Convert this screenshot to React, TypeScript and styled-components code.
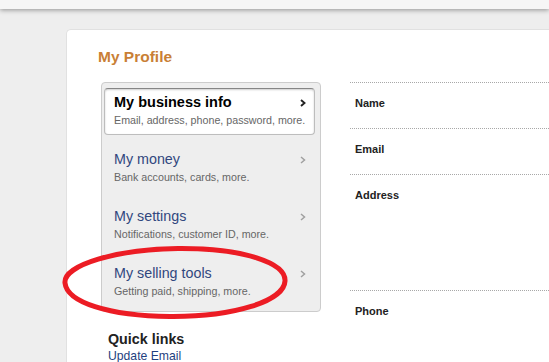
import React from "react";
import styled, { createGlobalStyle } from "styled-components";

const Global = createGlobalStyle`
  html, body {
    margin: 0;
    padding: 0;
    background: #eeeeee;
    font-family: "Liberation Sans", Arial, sans-serif;
    overflow: hidden;
  }
  #root { width: 549px; height: 362px; overflow: hidden; }
`;

const Page = styled.div`
  position: relative;
  width: 549px;
  height: 362px;
  overflow: hidden;
  background: #eeeeee;
`;

const TopBar = styled.div`
  height: 9px;
  background: #f6f6f6;
  box-shadow: 0 1px 5px rgba(0, 0, 0, 0.4);
  position: relative;
  z-index: 1;
`;

const Main = styled.div`
  padding: 20px 0 0 66px;
`;

const Card = styled.div`
  background: #ffffff;
  border: 1px solid #e1e1e1;
  border-right: none;
  border-top-left-radius: 5px;
  padding: 18px 0 0 31px;
  min-height: 400px;
`;

const Title = styled.h1`
  margin: 0;
  font-size: 15.5px;
  line-height: 18px;
  font-weight: bold;
  color: #c97f36;
`;

const Columns = styled.div`
  display: flex;
  align-items: flex-start;
  margin-top: 16px;
`;

const LeftColumn = styled.div`
  margin-left: 3px;
  width: 220px;
  flex: none;
`;

const NavPanel = styled.div`
  box-sizing: border-box;
  width: 220px;
  background: #eeeeee;
  border: 1px solid #cccccc;
  border-radius: 4px;
  padding: 5px 5px 5px 2px;
`;

const NavItem = styled.div<{ $active?: boolean }>`
  border: 1px solid ${(p) => (p.$active ? "#bdbdbd" : "transparent")};
  border-top-color: ${(p) => (p.$active ? "#858585" : "transparent")};
  background: ${(p) => (p.$active ? "#ffffff" : "transparent")};
  box-shadow: ${(p) => (p.$active ? "inset 0 1px 2px rgba(0,0,0,0.2)" : "none")};
  border-radius: 4px;
  padding: 4px 8px 7px 9px;
  margin-bottom: 10px;
  &:last-child { margin-bottom: 0; }
`;

const ItemHead = styled.div`
  display: flex;
  justify-content: space-between;
  align-items: center;
`;

const ItemTitle = styled.span<{ $active?: boolean }>`
  font-size: ${(p) => (p.$active ? "14.5px" : "14.3px")};
  line-height: 19px;
  font-weight: ${(p) => (p.$active ? "bold" : "normal")};
  color: ${(p) => (p.$active ? "#000000" : "#31477e")};
`;

const ItemSub = styled.div`
  margin-top: 1px;
  font-size: 10.7px;
  line-height: 14px;
  color: #666666;
  white-space: nowrap;
`;

const Chevron = ({ active }: { active?: boolean }) => (
  <svg width="6" height="8" viewBox="0 0 6 8" style={{ display: "block" }}>
    <polyline
      points="1,1 4.5,4 1,7"
      fill="none"
      stroke={active ? "#222222" : "#a0a0a0"}
      strokeWidth={active ? 1.9 : 1.5}
    />
  </svg>
);

const QuickLinks = styled.div`
  margin: 19px 0 0 7px;
`;

const QuickTitle = styled.div`
  font-size: 14.3px;
  line-height: 17px;
  font-weight: bold;
  color: #222222;
`;

const QuickLink = styled.a`
  display: block;
  font-size: 12.2px;
  line-height: 16px;
  color: #1f3f80;
  text-decoration: none;
`;

const Details = styled.div`
  flex: 1;
  margin-left: 29px;
`;

const Row = styled.div<{ $height: number }>`
  box-sizing: border-box;
  height: ${(p) => p.$height}px;
  border-top: 1px dotted #a8a8a8;
  padding: 13px 0 0 5px;
`;

const Label = styled.div`
  font-size: 11px;
  line-height: 14px;
  font-weight: bold;
  color: #222222;
`;

const Ring = styled.svg`
  position: absolute;
  left: 58px;
  top: 243px;
  pointer-events: none;
`;

const items = [
  { title: "My business info", sub: "Email, address, phone, password, more.", active: true },
  { title: "My money", sub: "Bank accounts, cards, more." },
  { title: "My settings", sub: "Notifications, customer ID, more." },
  { title: "My selling tools", sub: "Getting paid, shipping, more." },
];

const rows = [
  { label: "Name", h: 46 },
  { label: "Email", h: 46 },
  { label: "Address", h: 116 },
  { label: "Phone", h: 80 },
];

export default function App() {
  return (
    <Page>
      <Global />
      <TopBar />
      <Main>
        <Card>
          <Title>My Profile</Title>
          <Columns>
            <LeftColumn>
              <NavPanel>
                {items.map((it) => (
                  <NavItem key={it.title} $active={it.active}>
                    <ItemHead>
                      <ItemTitle $active={it.active}>{it.title}</ItemTitle>
                      <Chevron active={it.active} />
                    </ItemHead>
                    <ItemSub>{it.sub}</ItemSub>
                  </NavItem>
                ))}
              </NavPanel>
              <QuickLinks>
                <QuickTitle>Quick links</QuickTitle>
                <QuickLink href="#">Update Email</QuickLink>
              </QuickLinks>
            </LeftColumn>
            <Details>
              {rows.map((r) => (
                <Row key={r.label} $height={r.h}>
                  <Label>{r.label}</Label>
                </Row>
              ))}
            </Details>
          </Columns>
        </Card>
      </Main>
      <Ring width="234" height="82" viewBox="0 0 234 82">
        <path
          d="M 7 40 C 5 22, 60 6, 120 5.5 C 186 5, 228 20, 227 38 C 226 58, 176 74, 112 73.5 C 50 73, 9 59, 7 40 Z"
          fill="none"
          stroke="#ec1c24"
          strokeWidth="5"
        />
      </Ring>
    </Page>
  );
}
